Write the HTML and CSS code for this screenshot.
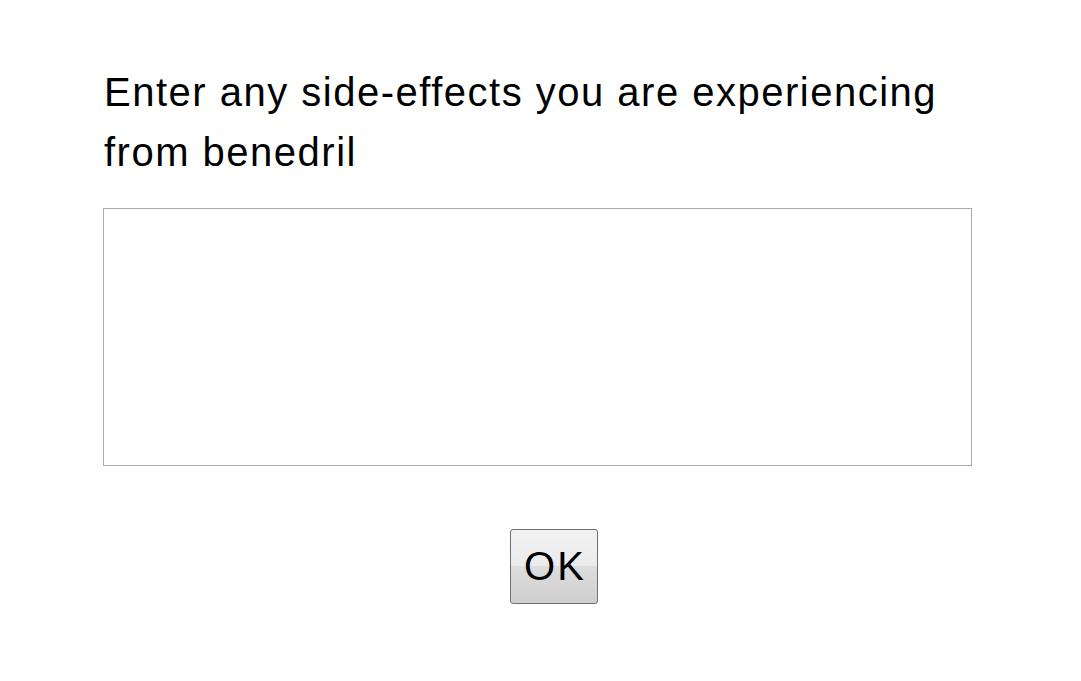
FILE: index.html
```html
<!DOCTYPE html>
<html>
	<head>
		<meta charset="utf-8">
		<title>Side-effects</title>
		<link rel="stylesheet" href="styles.css">
	</head>
	<body>
		<div id="mainBox">
			<p class="question">Enter any side-effects you are experiencing from benedril</p>
			<textarea class="answer"></textarea>
			<div class="buttonRow">
				<button class="okButton">OK</button>
			</div>
		</div>
	</body>
</html>
```

FILE: styles.css
```css
* {
	margin: 0;
	padding: 0;
	box-sizing: border-box;
}
body {
	background-color: #fff;
	font-family: "Liberation Sans", Arial, sans-serif;
	color: #000;
}
#mainBox {
	width: 869px;
	margin-left: 103px;
	padding-top: 62px;
}
.question {
	font-size: 40px;
	line-height: 60px;
	letter-spacing: 1.5px;
	padding-left: 1px;
	padding-right: 20px;
}
.answer {
	display: block;
	width: 869px;
	height: 258px;
	margin-top: 26px;
	border: 1px solid #ababab;
	resize: none;
	outline: none;
	font-family: "Liberation Sans", Arial, sans-serif;
}
.buttonRow {
	display: flex;
	padding-left: 407px;
	margin-top: 63px;
}
.okButton {
	width: 88px;
	height: 75px;
	font-family: "Liberation Sans", Arial, sans-serif;
	font-size: 40px;
	letter-spacing: 2px;
	text-indent: 2px;
	color: #000;
	border: 1px solid #707070;
	border-radius: 3px;
	background: linear-gradient(#f2f2f2 0%, #ebebeb 50%, #dddddd 50%, #cfcfcf 100%);
}
```
